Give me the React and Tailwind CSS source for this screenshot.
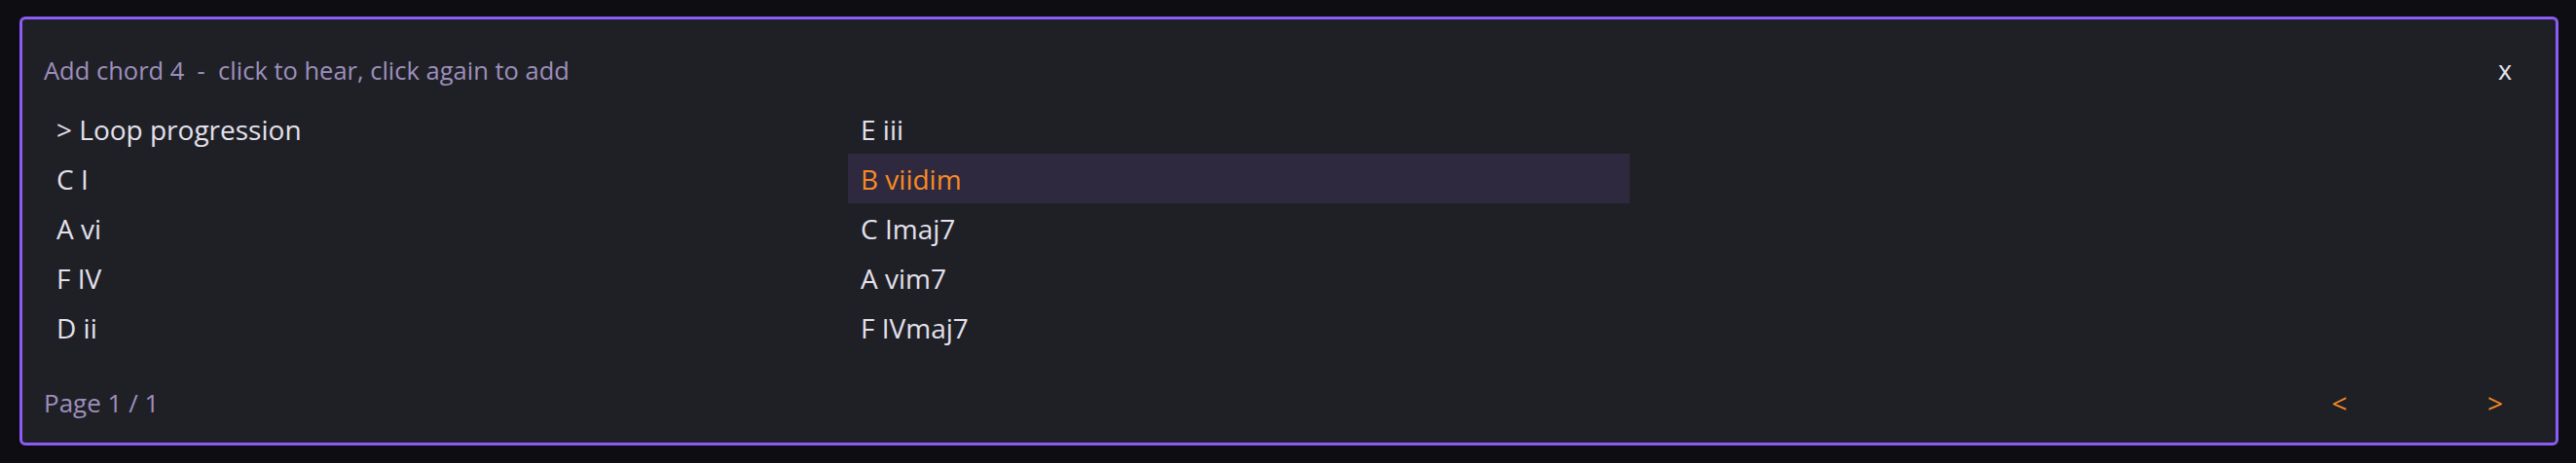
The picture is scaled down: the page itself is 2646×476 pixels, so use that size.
export default function App() {
  const left = ["> Loop progression", "C I", "A vi", "F IV", "D ii"];
  const right = ["E iii", "B viidim", "C Imaj7", "A vim7", "F IVmaj7"];
  const items = [...left, ...right];
  const font = { fontFamily: "'Open Sans', 'Noto Sans', sans-serif" };
  return (
    <div className="w-[2646px] h-[476px] bg-[#0e0e12] pt-[17px] pl-[20px] pr-[18px] pb-[18px]" style={font}>
      <div className="h-full border-[3px] border-[#8b5cf6] rounded-[6px] bg-[#1f2026] flex flex-col px-[22px] pt-[30px]">
        <div className="flex items-center justify-between h-[44px]">
          <span className="text-[25.5px] leading-[44px] text-[#9d8fbc] whitespace-pre">Add chord 4  -  click to hear, click again to add</span>
          <button className="w-[60px] text-center text-[27px] leading-[44px] text-[#e4e0ec]">x</button>
        </div>
        <div className="mt-[13px] grid grid-rows-[repeat(5,51px)] grid-flow-col auto-cols-[803px] gap-x-[23px] self-start">
          {items.map((t, i) => (
            <div
              key={i}
              className={
                "h-[51px] flex items-center px-[13px] text-[28px] whitespace-pre " +
                (t === "B viidim" ? "bg-[#2e293f] text-[#f68b25]" : "text-[#e4e0ec]")
              }
            >
              {t}
            </div>
          ))}
        </div>
        <div className="mt-[32px] flex items-center justify-between h-[40px]">
          <span className="text-[26px] leading-[40px] text-[#9d8fbc]">Page 1 / 1</span>
          <div className="flex gap-[80px]">
            <button className="w-[80px] text-center text-[28px] leading-[40px] text-[#f68b25]">&lt;</button>
            <button className="w-[80px] text-center text-[28px] leading-[40px] text-[#f68b25]">&gt;</button>
          </div>
        </div>
      </div>
    </div>
  );
}
